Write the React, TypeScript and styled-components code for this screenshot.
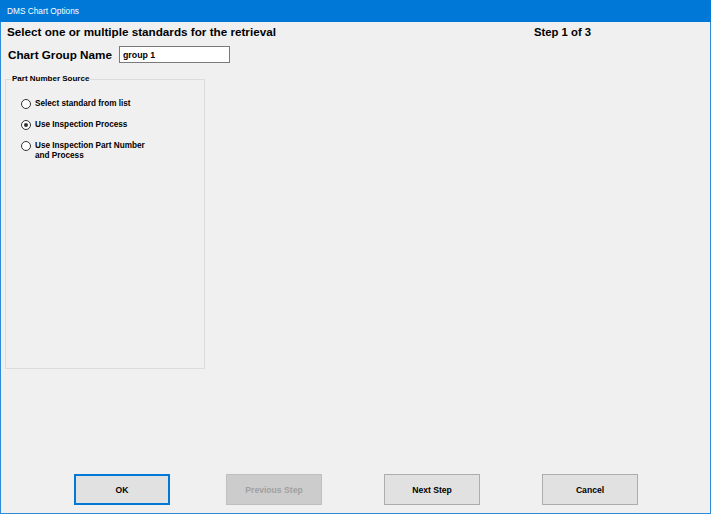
import React, { useState } from "react";
import styled, { createGlobalStyle } from "styled-components";

const GlobalStyle = createGlobalStyle`
  html, body {
    margin: 0;
    padding: 0;
    background: #f0f0f0;
  }
  body {
    font-family: "Liberation Sans", Arial, sans-serif;
  }
  * {
    box-sizing: border-box;
  }
`;

type Source = "list" | "process" | "partProcess";

const options: { id: Source; label: string[] }[] = [
  { id: "list", label: ["Select standard from list"] },
  { id: "process", label: ["Use Inspection Process"] },
  { id: "partProcess", label: ["Use Inspection Part Number", "and Process"] },
];

const App: React.FC = () => {
  const [source, setSource] = useState<Source>("process");
  const [groupName, setGroupName] = useState("group 1");

  return (
    <>
      <GlobalStyle />
      <StyledWindow>
        <StyledTitleBar>DMS Chart Options</StyledTitleBar>
        <StyledBody>
          <StyledHeader>
            <StyledHeading>Select one or multiple standards for the retrieval</StyledHeading>
            <StyledStep>Step 1 of 3</StyledStep>
          </StyledHeader>

          <StyledNameRow>
            <StyledNameLabel>Chart Group Name</StyledNameLabel>
            <StyledInput
              value={groupName}
              onChange={(e) => setGroupName(e.target.value)}
            />
          </StyledNameRow>

          <StyledGroup>
            <StyledLegend>Part Number Source</StyledLegend>
            <StyledRadioList>
              {options.map((opt) => (
                <StyledRadioRow key={opt.id} onClick={() => setSource(opt.id)}>
                  <StyledRadio $checked={source === opt.id} />
                  <StyledRadioLabel>
                    {opt.label.map((line) => (
                      <span key={line}>{line}</span>
                    ))}
                  </StyledRadioLabel>
                </StyledRadioRow>
              ))}
            </StyledRadioList>
          </StyledGroup>

          <StyledFooter>
            <StyledButton $focused>OK</StyledButton>
            <StyledButton disabled $gap={56}>
              Previous Step
            </StyledButton>
            <StyledButton $gap={62}>Next Step</StyledButton>
            <StyledButton $gap={62}>Cancel</StyledButton>
          </StyledFooter>
        </StyledBody>
      </StyledWindow>
    </>
  );
};

export default App;

const StyledWindow = styled.div`
  width: 711px;
  height: 514px;
  display: flex;
  flex-direction: column;
  border: 1px solid #2f8ad8;
  border-top: none;
  background: #f0f0f0;
`;

const StyledTitleBar = styled.div`
  height: 22px;
  margin: 0 -1px;
  padding-left: 7px;
  display: flex;
  align-items: center;
  background: #0078d7;
  color: #ffffff;
  font-size: 8.3px;
`;

const StyledBody = styled.div`
  flex: 1;
  display: flex;
  flex-direction: column;
  padding-top: 3px;
`;

const StyledHeader = styled.div`
  display: flex;
  align-items: flex-end;
  height: 14px;
  padding-left: 6px;
`;

const StyledHeading = styled.div`
  flex: 0 0 527px;
  font-size: 11.7px;
  line-height: 14px;
  font-weight: bold;
  color: #000;
`;

const StyledStep = styled.div`
  font-size: 11.3px;
  line-height: 14px;
  font-weight: bold;
  color: #000;
`;

const StyledNameRow = styled.div`
  display: flex;
  align-items: center;
  margin-top: 7px;
  padding-left: 7px;
`;

const StyledNameLabel = styled.div`
  width: 111px;
  font-size: 11.7px;
  font-weight: bold;
  color: #000;
`;

const StyledInput = styled.input`
  width: 111px;
  height: 17px;
  padding: 0 3px;
  border: 1px solid #7a7a7a;
  background: #ffffff;
  font-family: "Liberation Sans", Arial, sans-serif;
  font-size: 8.8px;
  font-weight: bold;
  color: #000;
  outline: none;
`;

const StyledGroup = styled.fieldset`
  width: 200px;
  height: 295px;
  margin: 11px 0 0 4px;
  padding: 0 5px;
  border: 1px solid #dcdcdc;
`;

const StyledLegend = styled.legend`
  padding: 0 1px;
  font-size: 8px;
  line-height: 10px;
  font-weight: bold;
  color: #000;
`;

const StyledRadioList = styled.div`
  display: flex;
  flex-direction: column;
  gap: 11px;
  margin-top: 15px;
  padding-left: 10px;
`;

const StyledRadioRow = styled.div`
  display: flex;
  align-items: flex-start;
  gap: 4px;
  cursor: default;
`;

const StyledRadio = styled.span<{ $checked?: boolean }>`
  position: relative;
  flex: 0 0 auto;
  width: 10px;
  height: 10px;
  border: 1px solid #333333;
  border-radius: 50%;
  background: #ffffff;

  &::after {
    content: "";
    display: ${(p) => (p.$checked ? "block" : "none")};
    position: absolute;
    left: 2px;
    top: 2px;
    width: 4px;
    height: 4px;
    border-radius: 50%;
    background: #333333;
  }
`;

const StyledRadioLabel = styled.div`
  display: flex;
  flex-direction: column;
  font-size: 8.2px;
  line-height: 10px;
  font-weight: bold;
  color: #000;
`;

const StyledFooter = styled.div`
  display: flex;
  margin-top: auto;
  padding: 0 0 8px 73px;
`;

const StyledButton = styled.button<{ $focused?: boolean; $gap?: number }>`
  width: 96px;
  height: 31px;
  margin-left: ${(p) => p.$gap ?? 0}px;
  border: ${(p) => (p.$focused ? "2px solid #0078d7" : "1px solid #adadad")};
  background: #e1e1e1;
  font-family: "Liberation Sans", Arial, sans-serif;
  font-size: 8.6px;
  font-weight: bold;
  color: #000;
  padding: 0;

  &:disabled {
    background: #cccccc;
    border-color: #bfbfbf;
    color: #a0a0a0;
  }
`;
